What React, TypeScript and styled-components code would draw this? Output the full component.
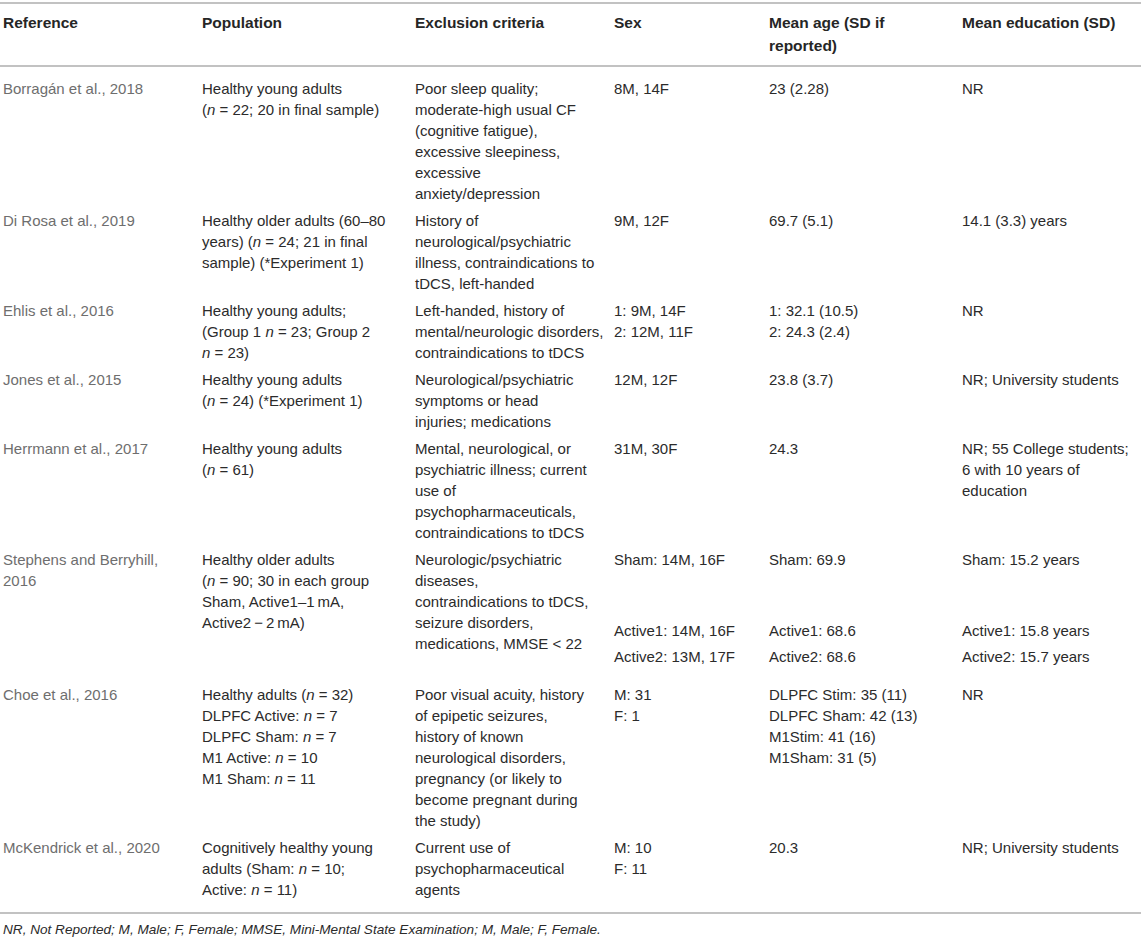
import React from "react";
import styled, { createGlobalStyle } from "styled-components";

const GlobalStyle = createGlobalStyle`
  html, body {
    margin: 0;
    padding: 0;
    background: #ffffff;
  }
  body {
    font-family: "Liberation Sans", Arial, Helvetica, sans-serif;
    color: #2b2b2b;
  }
`;

const COLS = "199px 213px 199px 155px 193px 1fr";

const Table = styled.div`
  width: 1141px;
  margin-top: 2px;
  border-top: 2px solid #c2c2c2;
  font-size: 15px;
`;

const HeaderRow = styled.div`
  display: grid;
  grid-template-columns: ${COLS};
  padding: 7px 0 8px;
  border-bottom: 2px solid #c2c2c2;
  line-height: 23px;
  font-size: 15.5px;
  font-weight: bold;
  color: #262626;
`;

const HeadCell = styled.div`
  padding-left: 3px;
`;

const Body = styled.div`
  padding: 8px 0 9px;
`;

const Row = styled.div`
  display: grid;
  grid-template-columns: ${COLS};
  padding: 3px 0;
  line-height: 21px;
`;

const Cell = styled.div<{ $muted?: boolean }>`
  padding-left: 3px;
  color: ${(p) => (p.$muted ? "#6e6e6e" : "#2b2b2b")};
`;

const Line = styled.span`
  display: block;
  white-space: nowrap;
`;

const Stack = styled.div<{ $tail: number }>`
  padding-bottom: ${(p) => p.$tail}px;
`;

const Entry = styled.span<{ $offset: number }>`
  display: block;
  white-space: nowrap;
  margin-top: ${(p) => p.$offset}px;
`;

const Footer = styled.div`
  border-top: 2px solid #c2c2c2;
  padding: 7px 0 0 3px;
  font-size: 13.6px;
  line-height: 18px;
  font-style: italic;
  color: #2b2b2b;
`;

type Grouped = { entries: { text: string; offset: number }[]; tail: number };
type Content = React.ReactNode[] | Grouped;

type RowData = {
  ref: string[];
  cells: Content[];
};

const N = () => <i>n</i>;

const group = (a: string, b: string, c: string): Grouped => ({
  entries: [
    { text: a, offset: 0 },
    { text: b, offset: 50 },
    { text: c, offset: 5 },
  ],
  tail: 11,
});

const rows: RowData[] = [
  {
    ref: ["Borragán et al., 2018"],
    cells: [
      ["Healthy young adults", <>(<N /> = 22; 20 in final sample)</>],
      [
        "Poor sleep quality;",
        "moderate-high usual CF",
        "(cognitive fatigue),",
        "excessive sleepiness,",
        "excessive",
        "anxiety/depression",
      ],
      ["8M, 14F"],
      ["23 (2.28)"],
      ["NR"],
    ],
  },
  {
    ref: ["Di Rosa et al., 2019"],
    cells: [
      [
        "Healthy older adults (60–80",
        <>years) (<N /> = 24; 21 in final</>,
        "sample) (*Experiment 1)",
      ],
      [
        "History of",
        "neurological/psychiatric",
        "illness, contraindications to",
        "tDCS, left-handed",
      ],
      ["9M, 12F"],
      ["69.7 (5.1)"],
      ["14.1 (3.3) years"],
    ],
  },
  {
    ref: ["Ehlis et al., 2016"],
    cells: [
      [
        "Healthy young adults;",
        <>(Group 1 <N /> = 23; Group 2</>,
        <><N /> = 23)</>,
      ],
      [
        "Left-handed, history of",
        "mental/neurologic disorders,",
        "contraindications to tDCS",
      ],
      ["1: 9M, 14F", "2: 12M, 11F"],
      ["1: 32.1 (10.5)", "2: 24.3 (2.4)"],
      ["NR"],
    ],
  },
  {
    ref: ["Jones et al., 2015"],
    cells: [
      ["Healthy young adults", <>(<N /> = 24) (*Experiment 1)</>],
      ["Neurological/psychiatric", "symptoms or head", "injuries; medications"],
      ["12M, 12F"],
      ["23.8 (3.7)"],
      ["NR; University students"],
    ],
  },
  {
    ref: ["Herrmann et al., 2017"],
    cells: [
      ["Healthy young adults", <>(<N /> = 61)</>],
      [
        "Mental, neurological, or",
        "psychiatric illness; current",
        "use of",
        "psychopharmaceuticals,",
        "contraindications to tDCS",
      ],
      ["31M, 30F"],
      ["24.3"],
      ["NR; 55 College students;", "6 with 10 years of", "education"],
    ],
  },
  {
    ref: ["Stephens and Berryhill,", "2016"],
    cells: [
      [
        "Healthy older adults",
        <>(<N /> = 90; 30 in each group</>,
        "Sham, Active1–1\u2009mA,",
        "Active2\u2009−\u20092\u2009mA)",
      ],
      [
        "Neurologic/psychiatric",
        "diseases,",
        "contraindications to tDCS,",
        "seizure disorders,",
        "medications, MMSE < 22",
      ],
      group("Sham: 14M, 16F", "Active1: 14M, 16F", "Active2: 13M, 17F"),
      group("Sham: 69.9", "Active1: 68.6", "Active2: 68.6"),
      group("Sham: 15.2 years", "Active1: 15.8 years", "Active2: 15.7 years"),
    ],
  },
  {
    ref: ["Choe et al., 2016"],
    cells: [
      [
        <>Healthy adults (<N /> = 32)</>,
        <>DLPFC Active: <N /> = 7</>,
        <>DLPFC Sham: <N /> = 7</>,
        <>M1 Active: <N /> = 10</>,
        <>M1 Sham: <N /> = 11</>,
      ],
      [
        "Poor visual acuity, history",
        "of epipetic seizures,",
        "history of known",
        "neurological disorders,",
        "pregnancy (or likely to",
        "become pregnant during",
        "the study)",
      ],
      ["M: 31", "F: 1"],
      [
        "DLPFC Stim: 35 (11)",
        "DLPFC Sham: 42 (13)",
        "M1Stim: 41 (16)",
        "M1Sham: 31 (5)",
      ],
      ["NR"],
    ],
  },
  {
    ref: ["McKendrick et al., 2020"],
    cells: [
      [
        "Cognitively healthy young",
        <>adults (Sham: <N /> = 10;</>,
        <>Active: <N /> = 11)</>,
      ],
      ["Current use of", "psychopharmaceutical", "agents"],
      ["M: 10", "F: 11"],
      ["20.3"],
      ["NR; University students"],
    ],
  },
];

const headers: React.ReactNode[][] = [
  ["Reference"],
  ["Population"],
  ["Exclusion criteria"],
  ["Sex"],
  ["Mean age (SD if", "reported)"],
  ["Mean education (SD)"],
];

function renderContent(c: Content) {
  if (Array.isArray(c)) {
    return c.map((l, i) => <Line key={i}>{l}</Line>);
  }
  return (
    <Stack $tail={c.tail}>
      {c.entries.map((e, i) => (
        <Entry key={i} $offset={e.offset}>
          {e.text}
        </Entry>
      ))}
    </Stack>
  );
}

export default function App() {
  return (
    <>
      <GlobalStyle />
      <Table>
        <HeaderRow>
          {headers.map((h, i) => (
            <HeadCell key={i}>
              {h.map((l, j) => (
                <Line key={j}>{l}</Line>
              ))}
            </HeadCell>
          ))}
        </HeaderRow>
        <Body>
          {rows.map((r, i) => (
            <Row key={i}>
              <Cell $muted>
                {r.ref.map((l, j) => (
                  <Line key={j}>{l}</Line>
                ))}
              </Cell>
              {r.cells.map((c, j) => (
                <Cell key={j}>{renderContent(c)}</Cell>
              ))}
            </Row>
          ))}
        </Body>
        <Footer>
          NR, Not Reported; M, Male; F, Female; MMSE, Mini-Mental State
          Examination; M, Male; F, Female.
        </Footer>
      </Table>
    </>
  );
}
